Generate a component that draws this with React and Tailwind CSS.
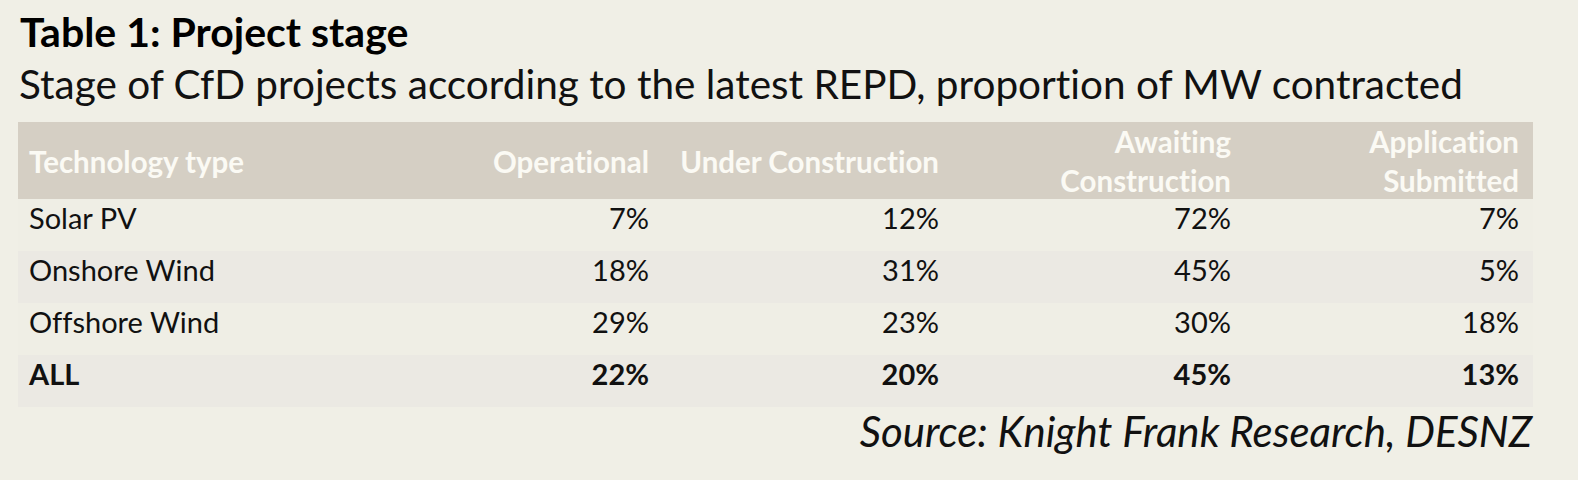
import React from "react";

const rows = [
  { name: "Solar PV", vals: ["7%", "12%", "72%", "7%"], bg: "bg-[#efeee5]" },
  { name: "Onshore Wind", vals: ["18%", "31%", "45%", "5%"], bg: "bg-[#ebe9e3]" },
  { name: "Offshore Wind", vals: ["29%", "23%", "30%", "18%"], bg: "bg-[#efeee5]" },
  { name: "ALL", vals: ["22%", "20%", "45%", "13%"], bg: "bg-[#ebe9e3]", bold: true },
];

const grid = "grid grid-cols-[452px_193px_290px_292px_288px]";

const App = () => {
  return (
    <div className="w-[1578px] h-[480px] bg-[#f0efe6] font-['Lato',sans-serif] [font-variant-ligatures:none] text-[#111] pl-[18px] pt-[8px] overflow-hidden">
      {/* title */}
      <h1 className="text-[41px] font-bold leading-[47px] pl-[2px] text-black">
        Table 1: Project stage
      </h1>
      <p className="text-[40.5px] leading-[57px] pl-[1px]">
        Stage of CfD projects according to the latest REPD, proportion of MW contracted
      </p>

      <div className="w-[1515px] mt-[10px]">
        {/* header */}
        <div className={`${grid} h-[77px] bg-[#d5cfc4] text-[#fbfaf4] font-bold text-[29.5px] leading-[39px]`}>
          <div className="flex items-center pl-[11px]">Technology type</div>
          <div className="flex items-center justify-end pr-[14px]">Operational</div>
          <div className="flex items-center justify-end pr-[14px]">Under Construction</div>
          <div className="flex items-center justify-end text-right pr-[14px]">
            Awaiting
            <br />
            Construction
          </div>
          <div className="flex items-center justify-end text-right pr-[14px]">
            Application
            <br />
            Submitted
          </div>
        </div>

        {/* rows */}
        {rows.map((r) => (
          <div
            key={r.name}
            className={`${grid} h-[52px] ${r.bg} text-[29px] leading-[35px] pt-[1px] ${r.bold ? "font-bold" : ""}`}
          >
            <div className="pl-[11px]">{r.name}</div>
            {r.vals.map((v, i) => (
              <div key={i} className="text-right pr-[14px]">
                {v}
              </div>
            ))}
          </div>
        ))}
      </div>

      {/* source */}
      <div className="w-[1515px] text-right italic text-[42px] leading-[48px] pr-[1px]">
        Source: Knight Frank Research, DESNZ
      </div>
    </div>
  );
};

export default App;
